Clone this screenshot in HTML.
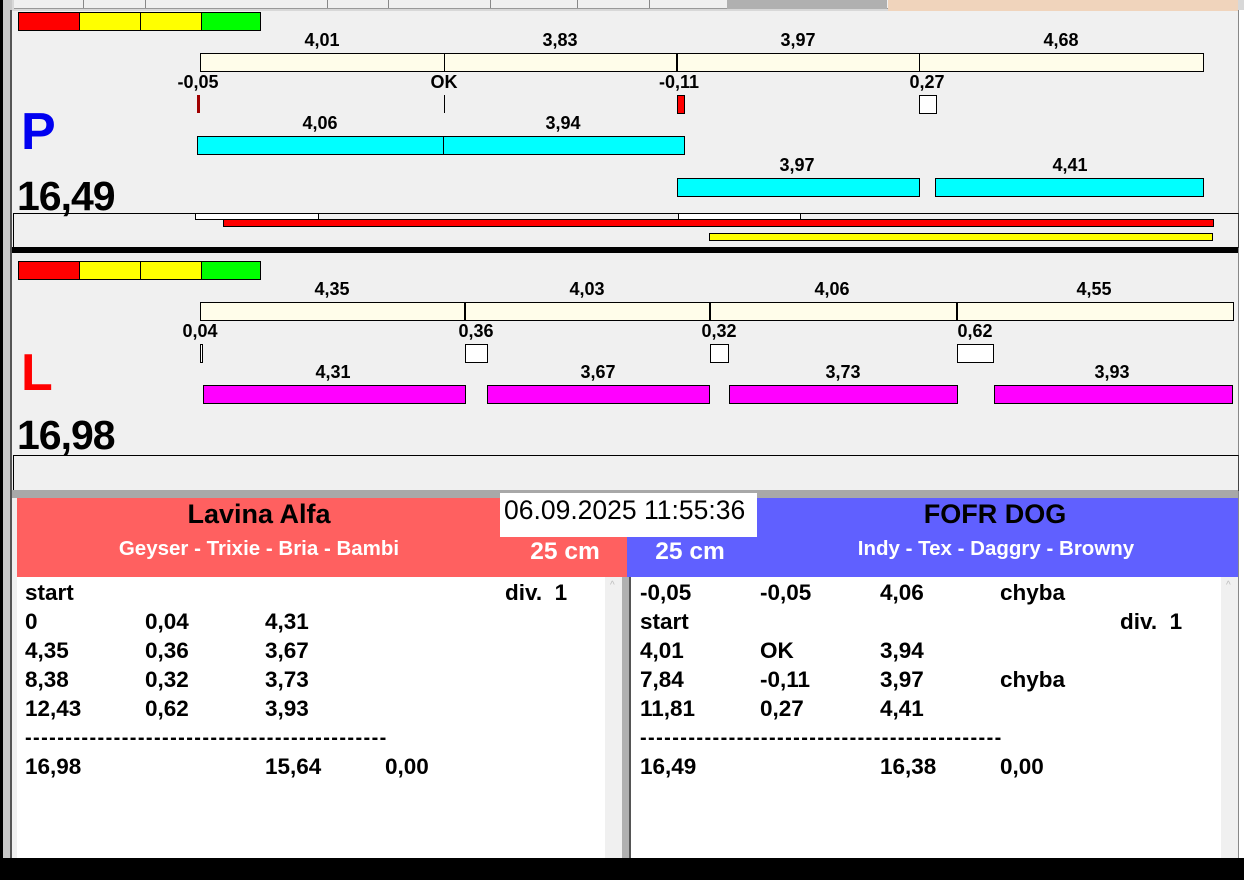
<!DOCTYPE html>
<html><head><meta charset="utf-8"><style>
*{margin:0;padding:0;box-sizing:border-box}
body{width:1244px;height:880px;position:relative;overflow:hidden;background:#f0f0f0;font-family:"Liberation Sans",Arial,sans-serif;font-weight:bold}
div,span{position:absolute}
.r{border:1px solid #000}
.t{font-size:18px;transform:translateX(-50%);white-space:nowrap;line-height:18px}
.l{font-size:22.5px;line-height:24px;white-space:nowrap}
</style></head><body>
<div style="left:0;top:0;width:1244px;height:11px;background:#d8d8d8"></div>
<div style="left:14px;top:0;width:874px;height:9px;background:#f0f0f0;border-bottom:1px solid #999"></div>
<div style="left:83px;top:0;width:1px;height:8px;background:#888"></div>
<div style="left:145px;top:0;width:1px;height:8px;background:#888"></div>
<div style="left:327px;top:0;width:1px;height:8px;background:#888"></div>
<div style="left:388px;top:0;width:1px;height:8px;background:#888"></div>
<div style="left:490px;top:0;width:1px;height:8px;background:#888"></div>
<div style="left:577px;top:0;width:1px;height:8px;background:#888"></div>
<div style="left:649px;top:0;width:1px;height:8px;background:#888"></div>
<div style="left:727px;top:0;width:160px;height:9px;background:#b0b0b0"></div>
<div style="left:888px;top:0;width:350px;height:11px;background:#f0d4bc"></div>
<div style="left:0;top:0;width:3px;height:880px;background:#000"></div>
<div style="left:3px;top:0;width:9px;height:880px;background:#c8c8c8"></div>
<div style="left:10px;top:10px;width:2px;height:850px;background:#555"></div>
<div style="left:1238px;top:10px;width:6px;height:850px;background:#fff"></div>
<div style="left:1238px;top:10px;width:1px;height:850px;background:#888"></div>

<div class="r" style="left:18px;top:12px;width:62px;height:19px;background:#f00"></div>
<div class="r" style="left:79px;top:12px;width:62px;height:19px;background:#ff0"></div>
<div class="r" style="left:140px;top:12px;width:62px;height:19px;background:#ff0"></div>
<div class="r" style="left:201px;top:12px;width:60px;height:19px;background:#0f0"></div>
<div class="t" style="left:322px;top:31px">4,01</div>
<div class="t" style="left:560px;top:31px">3,83</div>
<div class="t" style="left:798px;top:31px">3,97</div>
<div class="t" style="left:1061px;top:31px">4,68</div>
<div class="r" style="left:200px;top:53px;width:1004px;height:19px;background:#fffdea"></div>
<div style="left:444px;top:53px;width:1px;height:19px;background:#000"></div>
<div style="left:676px;top:53px;width:2px;height:19px;background:#000"></div>
<div style="left:919px;top:53px;width:1px;height:19px;background:#000"></div>
<div class="t" style="left:198px;top:73px">-0,05</div>
<div class="t" style="left:444px;top:73px">OK</div>
<div class="t" style="left:679px;top:73px">-0,11</div>
<div class="t" style="left:927px;top:73px">0,27</div>
<div style="left:197px;top:95px;width:3px;height:18px;background:#a00000"></div>
<div style="left:444px;top:95px;width:1px;height:18px;background:#000"></div>
<div class="r" style="left:677px;top:95px;width:8px;height:19px;background:#f00"></div>
<div class="r" style="left:919px;top:95px;width:18px;height:19px;background:#fff"></div>
<div style="left:21px;top:104px;font-size:52px;color:#0000f0;line-height:56px">P</div>
<div class="t" style="left:320px;top:114px">4,06</div>
<div class="t" style="left:563px;top:114px">3,94</div>
<div class="r" style="left:197px;top:136px;width:488px;height:19px;background:#0ff"></div>
<div style="left:443px;top:136px;width:1px;height:19px;background:#000"></div>
<div class="t" style="left:797px;top:156px">3,97</div>
<div class="t" style="left:1070px;top:156px">4,41</div>
<div class="r" style="left:677px;top:178px;width:243px;height:19px;background:#0ff"></div>
<div class="r" style="left:935px;top:178px;width:269px;height:19px;background:#0ff"></div>
<div style="left:17px;top:173px;font-size:41px;line-height:46px;letter-spacing:-1px">16,49</div>
<div style="left:13px;top:213px;width:1226px;height:35px;border:1px solid #000;border-bottom:none;border-right:1px solid #444"></div>
<div class="r" style="left:195px;top:213px;width:124px;height:7px;background:#fff"></div>
<div class="r" style="left:678px;top:213px;width:123px;height:7px;background:#fff"></div>
<div class="r" style="left:223px;top:219px;width:991px;height:8px;background:#f00"></div>
<div class="r" style="left:709px;top:233px;width:504px;height:8px;background:#ff0"></div>
<div style="left:12px;top:247px;width:1226px;height:6px;background:#000"></div>

<div class="r" style="left:18px;top:261px;width:62px;height:19px;background:#f00"></div>
<div class="r" style="left:79px;top:261px;width:62px;height:19px;background:#ff0"></div>
<div class="r" style="left:140px;top:261px;width:62px;height:19px;background:#ff0"></div>
<div class="r" style="left:201px;top:261px;width:60px;height:19px;background:#0f0"></div>
<div class="t" style="left:332px;top:280px">4,35</div>
<div class="t" style="left:587px;top:280px">4,03</div>
<div class="t" style="left:832px;top:280px">4,06</div>
<div class="t" style="left:1094px;top:280px">4,55</div>
<div class="r" style="left:200px;top:302px;width:1034px;height:19px;background:#fffdea"></div>
<div style="left:464px;top:302px;width:2px;height:19px;background:#000"></div>
<div style="left:709px;top:302px;width:2px;height:19px;background:#000"></div>
<div style="left:956px;top:302px;width:2px;height:19px;background:#000"></div>
<div class="t" style="left:200px;top:322px">0,04</div>
<div class="t" style="left:476px;top:322px">0,36</div>
<div class="t" style="left:719px;top:322px">0,32</div>
<div class="t" style="left:975px;top:322px">0,62</div>
<div class="r" style="left:200px;top:344px;width:3px;height:19px;background:#fff"></div>
<div class="r" style="left:465px;top:344px;width:23px;height:19px;background:#fff"></div>
<div class="r" style="left:710px;top:344px;width:19px;height:19px;background:#fff"></div>
<div class="r" style="left:957px;top:344px;width:37px;height:19px;background:#fff"></div>
<div style="left:21px;top:345px;font-size:52px;color:#f00;line-height:56px">L</div>
<div class="t" style="left:333px;top:363px">4,31</div>
<div class="t" style="left:598px;top:363px">3,67</div>
<div class="t" style="left:843px;top:363px">3,73</div>
<div class="t" style="left:1112px;top:363px">3,93</div>
<div class="r" style="left:203px;top:385px;width:263px;height:19px;background:#f0f"></div>
<div class="r" style="left:487px;top:385px;width:223px;height:19px;background:#f0f"></div>
<div class="r" style="left:729px;top:385px;width:229px;height:19px;background:#f0f"></div>
<div class="r" style="left:994px;top:385px;width:239px;height:19px;background:#f0f"></div>
<div style="left:17px;top:412px;font-size:41px;line-height:46px;letter-spacing:-1px">16,98</div>
<div style="left:13px;top:455px;width:1226px;height:36px;border:1px solid #000;border-bottom:none;border-right:1px solid #444"></div>
<div style="left:12px;top:490px;width:1226px;height:8px;background:#a8a8a8"></div>

<div style="left:17px;top:498px;width:610px;height:79px;background:#ff6060"></div>
<div style="left:627px;top:498px;width:611px;height:79px;background:#6060ff"></div>
<div style="left:500px;top:493px;width:257px;height:44px;background:#fff"></div>
<div style="left:504px;top:495px;font-size:26.5px;font-weight:normal;line-height:30px;white-space:nowrap">06.09.2025 11:55:36</div>
<div class="t" style="left:259px;top:499px;font-size:27px;line-height:30px">Lavina Alfa</div>
<div class="t" style="left:259px;top:538px;font-size:20.5px;line-height:22px;color:#fff">Geyser - Trixie - Bria - Bambi</div>
<div class="t" style="left:565px;top:539px;font-size:24.5px;line-height:26px;color:#fff">25 cm</div>
<div class="t" style="left:995px;top:499px;font-size:27px;line-height:30px">FOFR DOG</div>
<div class="t" style="left:996px;top:538px;font-size:20.5px;line-height:22px;color:#fff">Indy - Tex - Daggry - Browny</div>
<div class="t" style="left:690px;top:539px;font-size:24.5px;line-height:26px;color:#fff">25 cm</div>
<div style="left:17px;top:577px;width:588px;height:281px;background:#fff"></div>
<div style="left:605px;top:577px;width:17px;height:281px;background:#f0f0f0"></div>
<div style="left:622px;top:577px;width:9px;height:281px;background:#b0b0b0;border-right:2px solid #555"></div>
<div style="left:631px;top:577px;width:590px;height:281px;background:#fff"></div>
<div style="left:1221px;top:577px;width:17px;height:281px;background:#f0f0f0"></div>
<div style="left:610px;top:580px;font-size:10px;color:#bbb;font-weight:normal">^</div>
<div style="left:1226px;top:580px;font-size:10px;color:#bbb;font-weight:normal">^</div>

<div class="l" style="left:25px;top:581px">start</div><div class="l" style="left:505px;top:581px">div.&nbsp; 1</div>
<div class="l" style="left:25px;top:610px">0</div><div class="l" style="left:145px;top:610px">0,04</div><div class="l" style="left:265px;top:610px">4,31</div>
<div class="l" style="left:25px;top:639px">4,35</div><div class="l" style="left:145px;top:639px">0,36</div><div class="l" style="left:265px;top:639px">3,67</div>
<div class="l" style="left:25px;top:668px">8,38</div><div class="l" style="left:145px;top:668px">0,32</div><div class="l" style="left:265px;top:668px">3,73</div>
<div class="l" style="left:25px;top:697px">12,43</div><div class="l" style="left:145px;top:697px">0,62</div><div class="l" style="left:265px;top:697px">3,93</div>
<div class="l" style="left:25px;top:726px;font-size:20px;letter-spacing:1.4px">---------------------------------------------</div>
<div class="l" style="left:25px;top:755px">16,98</div><div class="l" style="left:265px;top:755px">15,64</div><div class="l" style="left:385px;top:755px">0,00</div>

<div class="l" style="left:640px;top:581px">-0,05</div><div class="l" style="left:760px;top:581px">-0,05</div><div class="l" style="left:880px;top:581px">4,06</div><div class="l" style="left:1000px;top:581px">chyba</div>
<div class="l" style="left:640px;top:610px">start</div><div class="l" style="left:1120px;top:610px">div.&nbsp; 1</div>
<div class="l" style="left:640px;top:639px">4,01</div><div class="l" style="left:760px;top:639px">OK</div><div class="l" style="left:880px;top:639px">3,94</div>
<div class="l" style="left:640px;top:668px">7,84</div><div class="l" style="left:760px;top:668px">-0,11</div><div class="l" style="left:880px;top:668px">3,97</div><div class="l" style="left:1000px;top:668px">chyba</div>
<div class="l" style="left:640px;top:697px">11,81</div><div class="l" style="left:760px;top:697px">0,27</div><div class="l" style="left:880px;top:697px">4,41</div>
<div class="l" style="left:640px;top:726px;font-size:20px;letter-spacing:1.4px">---------------------------------------------</div>
<div class="l" style="left:640px;top:755px">16,49</div><div class="l" style="left:880px;top:755px">16,38</div><div class="l" style="left:1000px;top:755px">0,00</div>

<div style="left:0;top:858px;width:1244px;height:22px;background:#000"></div>
</body></html>
